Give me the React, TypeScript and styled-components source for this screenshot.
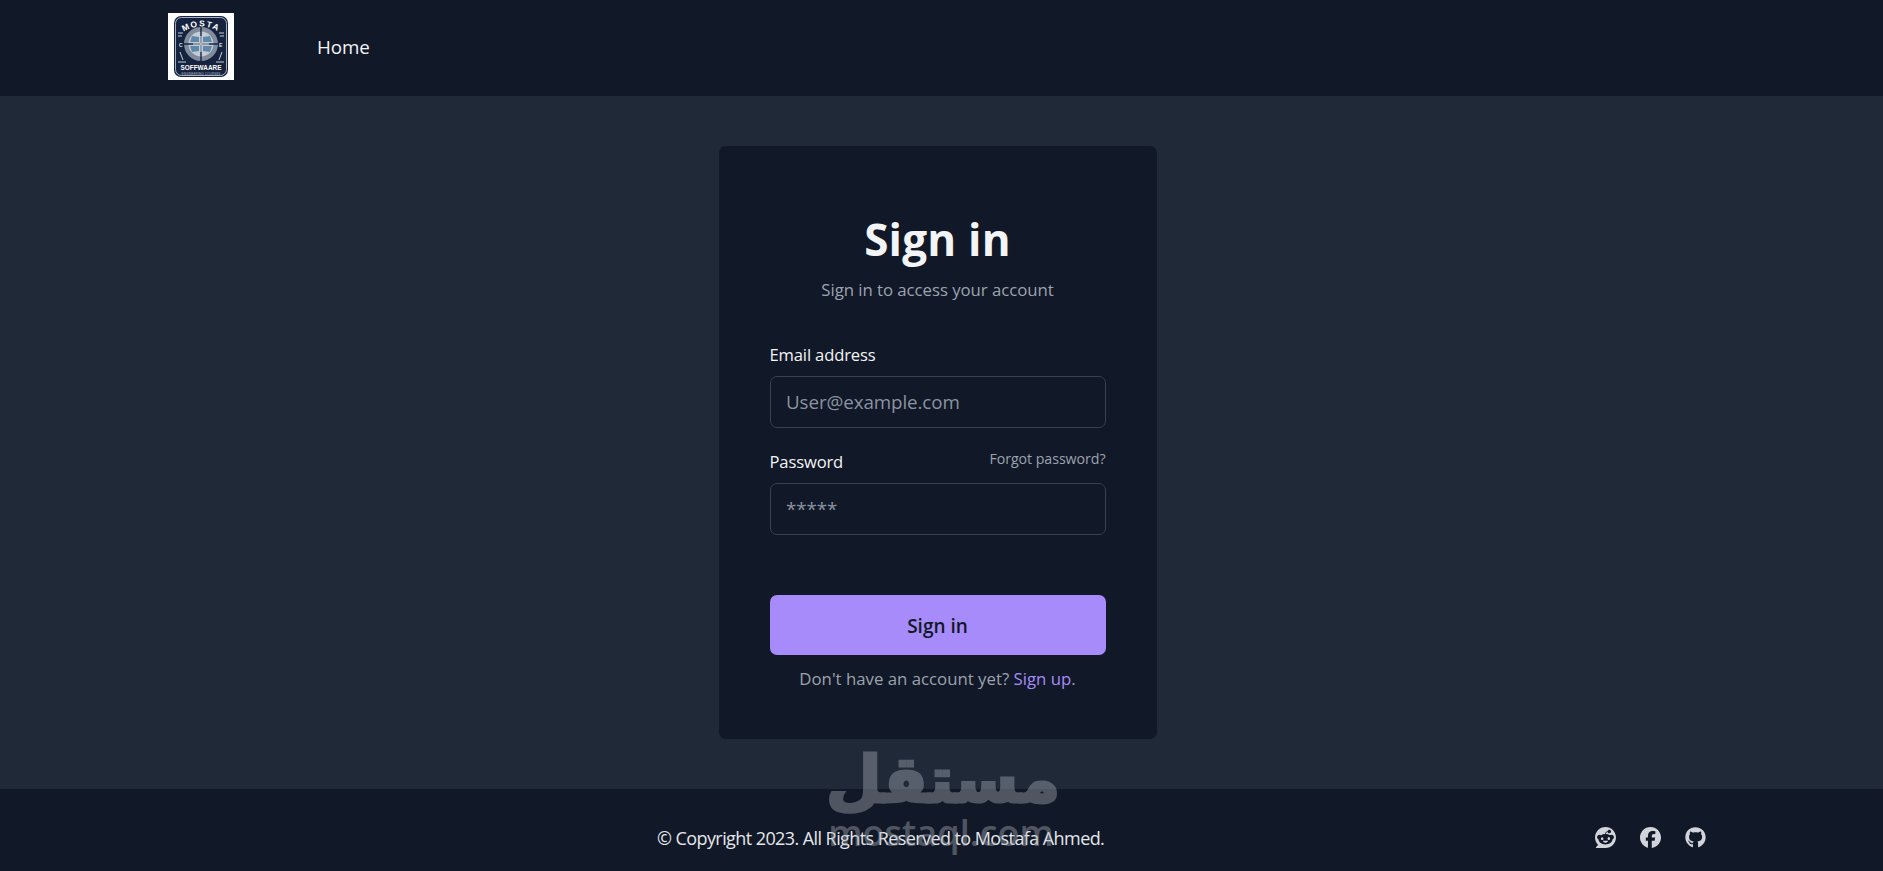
import React from 'react';
import styled, { createGlobalStyle } from 'styled-components';
import { FaReddit, FaFacebook, FaGithub } from 'react-icons/fa6';

const GlobalStyle = createGlobalStyle`
  html, body {
    margin: 0;
    padding: 0;
    background: #1f2937;
    font-family: "Open Sans", "Noto Sans", sans-serif;
  }
  * { box-sizing: border-box; }
`;

const Page = styled.div`
  position: relative;
  height: 871px;
  display: flex;
  flex-direction: column;
  overflow: hidden;
`;

const Header = styled.header`
  height: 96px;
  flex: none;
  background: #111827;
  display: flex;
  align-items: center;
  padding-left: 168px;
  gap: 83px;
`;

const LogoBox = styled.div`
  width: 66px;
  height: 67px;
  background: #fff;
  padding: 3px 6px;
  margin-top: -4px;
  svg { display: block; width: 54px; height: 61px; }
`;

const NavLink = styled.a`
  font-size: 18.8px;
  letter-spacing: -0.1px;
  color: #f3f4f6;
  margin-top: -2px;
`;

const Main = styled.main`
  flex: 1;
  display: flex;
  justify-content: center;
  padding: 50px 8px 0 0;
`;

const Card = styled.div`
  width: 438px;
  height: 593px;
  background: #111827;
  border-radius: 7px;
  padding: 0 51px;
`;

const Title = styled.h1`
  margin: 60px 0 0;
  height: 66px;
  line-height: 66px;
  text-align: center;
  font-size: 44px;
  font-weight: 700;
  letter-spacing: 0.2px;
  color: #f3f4f6;
`;

const Subtitle = styled.p`
  margin: 6px 0 0;
  text-align: center;
  font-size: 16.8px;
  line-height: 24px;
  letter-spacing: -0.05px;
  color: #9ca3af;
`;

const Field = styled.div<{ $gap: number }>`
  margin-top: ${p => p.$gap}px;
`;

const LabelRow = styled.div`
  height: 24px;
  display: flex;
  justify-content: space-between;
  align-items: flex-start;
`;

const Label = styled.label`
  font-size: 16.6px;
  line-height: 24px;
  letter-spacing: -0.15px;
  color: #f3f4f6;
`;

const Forgot = styled.a`
  font-size: 14.2px;
  line-height: 20px;
  letter-spacing: -0.05px;
  color: #9ca3af;
  margin-top: -1px;
`;

const Input = styled.input`
  display: block;
  width: 100%;
  height: 52px;
  margin-top: 9px;
  padding: 0 16px 0 15.5px;
  background: #111827;
  border: 1px solid #374151;
  border-radius: 7px;
  outline: none;
  font-family: inherit;
  font-size: 18.8px;
  letter-spacing: -0.1px;
  color: #f3f4f6;
  &::placeholder { color: #8b93a1; opacity: 1; }
`;

const SubmitButton = styled.button`
  display: block;
  width: 100%;
  height: 60px;
  margin-top: 60px;
  border: none;
  border-radius: 7px;
  background: #a78bfa;
  color: #111827;
  font-family: inherit;
  font-size: 19px;
  font-weight: 600;
  letter-spacing: 0;
  padding: 2px 0 0;
`;

const SignupNote = styled.p`
  margin: 12px 0 0;
  text-align: center;
  font-size: 16.8px;
  line-height: 24px;
  letter-spacing: 0;
  color: #9ca3af;
`;

const SignupLink = styled.a`
  color: #a78bfa;
`;

const Footer = styled.footer`
  height: 82px;
  flex: none;
  background: #111827;
  display: flex;
  align-items: center;
  justify-content: space-between;
  padding: 16px 177px 0 657px;
`;

const Copyright = styled.span`
  font-size: 18px;
  letter-spacing: -0.58px;
  color: #e5e7eb;
`;

const Socials = styled.div`
  display: flex;
  gap: 24px;
  color: #d1d5db;
  margin-top: -2px;
  svg { display: block; width: 21px; height: 21px; }
`;

/* mostaql watermark sitting over the footer edge */
const Watermark = styled.div`
  position: absolute;
  left: 826px;
  top: 738px;
  width: 230px;
  text-align: center;
  color: #a6abb5;
  opacity: 0.42;
  pointer-events: none;
`;

const WatermarkArabic = styled.div`
  font-family: "DejaVu Sans", sans-serif;
  font-size: 64px;
  font-weight: 700;
  line-height: 84px;
  -webkit-text-stroke: 3px #a6abb5;
  stroke-linejoin: round;
`;

const WatermarkLatin = styled.div`
  font-family: "Open Sans", sans-serif;
  font-size: 36px;
  font-weight: 600;
  line-height: 36px;
  margin-top: -7px;
`;

function Logo() {
  return (
    <svg viewBox="0 0 54 61">
      <rect width="54" height="61" rx="7" fill="#16233f" />
      <rect x="1.5" y="1.5" width="51" height="58" rx="6" fill="none" stroke="#e8edf3" strokeWidth="0.7" />
      <defs>
        <path id="logo-arch" d="M6 18 Q27 3 48 18" />
      </defs>
      <text fontFamily="Liberation Sans" fontSize="8.5" fontWeight="700" fill="#fff" letterSpacing="1.4">
        <textPath href="#logo-arch" startOffset="50%" textAnchor="middle">MOSTA</textPath>
      </text>
      <circle cx="27" cy="28" r="17" fill="#808b9c" />
      <circle cx="27" cy="28" r="12.5" fill="#c3ccd6" />
      <path d="M18 20l7 1v5h-9zM36 20l-7 1v5h9zM18 36l7-1v-5h-9zM36 36l-7-1v-5h9z" fill="#5f87a8" />
      <path d="M27 11v34M10 28h34" stroke="#16233f" strokeWidth="1.4" />
      <path d="M27 20v16M19 28h16" stroke="#f2f5f8" strokeWidth="0.9" />
      <text x="5" y="31" fontFamily="Liberation Sans" fontSize="5" fontWeight="700" fill="#dbe2ea">C</text>
      <text x="45" y="31" fontFamily="Liberation Sans" fontSize="5" fontWeight="700" fill="#dbe2ea">E</text>
      <path d="M4 17h5M45 17h5M4 20h4M46 20h4M6 36l3 8M48 36l-3 8M4 46h8M42 46h8" stroke="#dbe2ea" strokeWidth="0.9" fill="none" />
      <text x="27" y="54" textAnchor="middle" fontFamily="Liberation Sans" fontSize="6.4" fontWeight="700" fill="#fff">SOFFWAARE</text>
      <text x="27" y="58.5" textAnchor="middle" fontFamily="Liberation Sans" fontSize="3.2" fill="#aab5c3">ENGINEERING COURSES</text>
    </svg>
  );
}

export default function App() {
  return (
    <Page>
      <GlobalStyle />
      <Header>
        <LogoBox><Logo /></LogoBox>
        <NavLink>Home</NavLink>
      </Header>
      <Main>
        <Card>
          <Title>Sign in</Title>
          <Subtitle>Sign in to access your account</Subtitle>
          <Field $gap={41}>
            <LabelRow><Label>Email address</Label></LabelRow>
            <Input placeholder="User@example.com" />
          </Field>
          <Field $gap={22}>
            <LabelRow>
              <Label>Password</Label>
              <Forgot>Forgot password?</Forgot>
            </LabelRow>
            <Input placeholder="*****" />
          </Field>
          <SubmitButton>Sign in</SubmitButton>
          <SignupNote>Don't have an account yet? <SignupLink>Sign up</SignupLink>.</SignupNote>
        </Card>
      </Main>
      <Footer>
        <Copyright>© Copyright 2023. All Rights Reserved to Mostafa Ahmed.</Copyright>
        <Socials>
          <FaReddit />
          <FaFacebook />
          <FaGithub />
        </Socials>
      </Footer>
      <Watermark>
        <WatermarkArabic>مستقل</WatermarkArabic>
        <WatermarkLatin>mostaql.com</WatermarkLatin>
      </Watermark>
    </Page>
  );
}
